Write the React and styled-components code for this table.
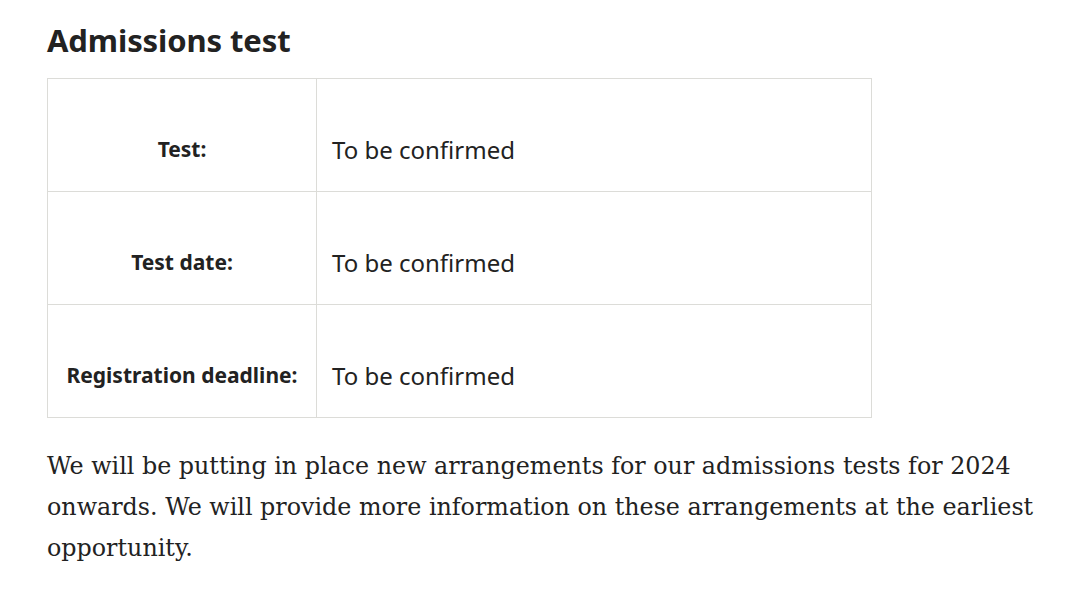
import React from "react";
import styled, { createGlobalStyle } from "styled-components";

const GlobalStyle = createGlobalStyle`
  body {
    margin: 0;
    background: white;
    color: #222;
  }
`;

const StyledPage = styled.div`
  padding: 18px 0 0 47px;
  width: 1000px;
`;

const StyledHeading = styled.h2`
  font-family: "Noto Sans", sans-serif;
  font-weight: 700;
  font-size: 31px;
  line-height: 44px;
  color: #222;
  margin: 0 0 16px;
  letter-spacing: -0.1px;
`;

const StyledTable = styled.table`
  border-collapse: collapse;
  table-layout: fixed;
  width: 825px;
  margin-bottom: 28px;
`;

const StyledRow = styled.tr`
  height: 113px;
`;

const StyledLabel = styled.th`
  border: 1px solid #dcdcd8;
  font-family: "Noto Sans", sans-serif;
  font-weight: 700;
  font-size: 21px;
  text-align: center;
  vertical-align: middle;
  padding: 28px 4px 0;
  color: #222;
`;

const StyledValue = styled.td`
  border: 1px solid #dcdcd8;
  font-family: "Noto Sans", sans-serif;
  font-size: 24px;
  padding: 28px 15px 0;
  vertical-align: middle;
  color: #222;
`;

const StyledParagraph = styled.p`
  font-family: "DejaVu Serif", serif;
  font-size: 23.8px;
  line-height: 41px;
  margin: 0;
  color: #222;
`;

const rows = [
  { label: "Test:", value: "To be confirmed" },
  { label: "Test date:", value: "To be confirmed" },
  { label: "Registration deadline:", value: "To be confirmed" }
];

const App = () => {
  return (
    <>
      <GlobalStyle />
      <StyledPage>
        <StyledHeading>Admissions test</StyledHeading>
        <StyledTable>
          <colgroup>
            <col style={{ width: "269px" }} />
            <col />
          </colgroup>
          <tbody>
            {rows.map(row => (
              <StyledRow key={row.label}>
                <StyledLabel scope="row">{row.label}</StyledLabel>
                <StyledValue>{row.value}</StyledValue>
              </StyledRow>
            ))}
          </tbody>
        </StyledTable>
        <StyledParagraph>
          We will be putting in place new arrangements for our admissions tests
          for 2024 onwards. We will provide more information on these
          arrangements at the earliest opportunity.
        </StyledParagraph>
      </StyledPage>
    </>
  );
};

export default App;
